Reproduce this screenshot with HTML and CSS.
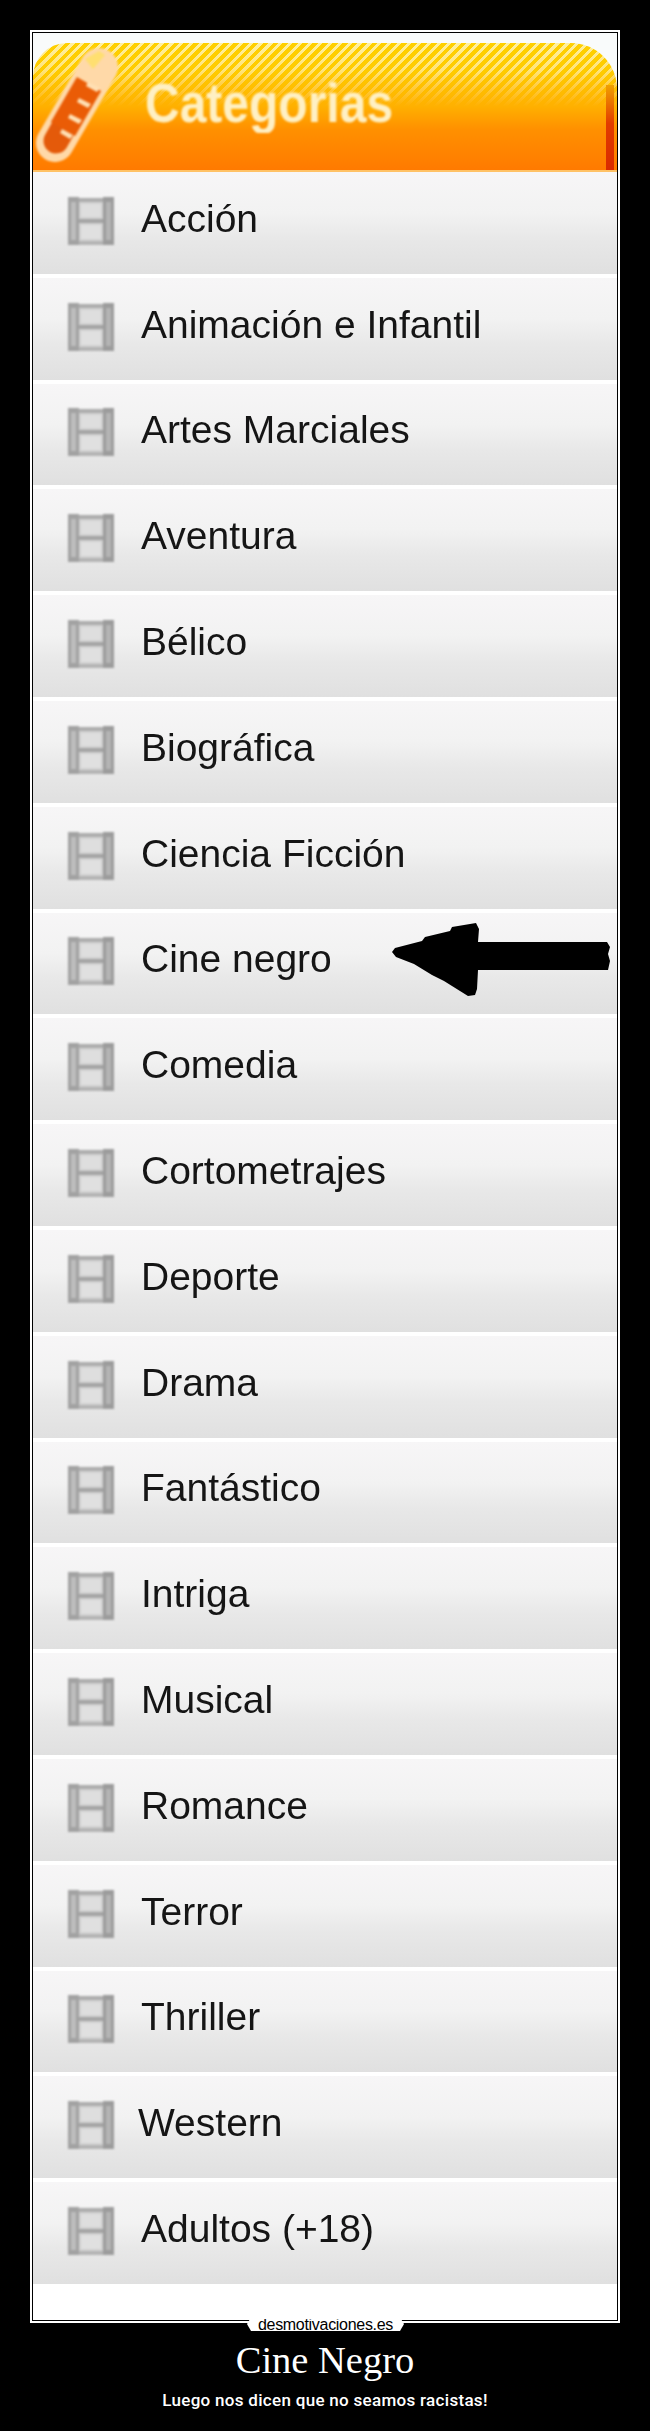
FILE: index.html
```html
<!DOCTYPE html>
<html lang="es">

<head>
  <meta charset="UTF-8">
  <meta name="viewport" content="width=device-width, initial-scale=1.0">
  <title>Cine Negro</title>
  <link rel="stylesheet" href="styles.css">
</head>

<body>
  <svg class="defs" width="0" height="0" aria-hidden="true">
    <symbol id="film" viewBox="0 0 46 48">
      <rect x="2" y="1" width="42" height="46" fill="#d2d2d2" />
      <rect x="0" y="0" width="11" height="48" fill="#a2a2a2" />
      <rect x="35" y="0" width="11" height="48" fill="#9c9c9c" />
      <rect x="3" y="5" width="5" height="38" fill="#bdbdbd" />
      <rect x="38" y="5" width="5" height="38" fill="#b4b4b4" />
      <rect x="11" y="1" width="24" height="4" fill="#adadad" />
      <rect x="11" y="22" width="24" height="4" fill="#a4a4a4" />
      <rect x="11" y="44" width="24" height="4" fill="#b4b4b4" />
      <rect x="13" y="7" width="20" height="13" fill="#dedede" />
      <rect x="13" y="28" width="20" height="14" fill="#e0e0e0" />
    </symbol>
  </svg>

  <div class="frame">
    <div class="header">
      <svg class="header-icon" width="100" height="130" viewBox="0 0 100 130">
        <path d="M22 100 L66 24" stroke="#ffd9a8" stroke-width="38" stroke-linecap="round" fill="none" />
        <path d="M52 16 L66 8 L72 12 L60 26 Z" fill="#ffdf70" />
        <path d="M23 98 L36 75" stroke="#e45a0a" stroke-width="25" stroke-linecap="round" fill="none" />
        <path d="M30 86 L56 41" stroke="#ea5c06" stroke-width="28" fill="none" />
        <path d="M64 49l-11-6 2-4 12 6zM55 65l-11-6 2-4 12 6zM46 81l-11-6 2-4 12 6zM37 96l-10-6 2-4 11 6z" fill="#ffe0b4" />
      </svg>
      <h2 class="header-title">Categorias</h2>
    </div>

    <ul class="cats">
      <li class="cat"><svg class="film"><use href="#film" /></svg><span>Acción</span></li>
      <li class="cat"><svg class="film"><use href="#film" /></svg><span>Animación e Infantil</span></li>
      <li class="cat"><svg class="film"><use href="#film" /></svg><span>Artes Marciales</span></li>
      <li class="cat"><svg class="film"><use href="#film" /></svg><span>Aventura</span></li>
      <li class="cat"><svg class="film"><use href="#film" /></svg><span>Bélico</span></li>
      <li class="cat"><svg class="film"><use href="#film" /></svg><span>Biográfica</span></li>
      <li class="cat"><svg class="film"><use href="#film" /></svg><span>Ciencia Ficción</span></li>
      <li class="cat">
        <svg class="film"><use href="#film" /></svg><span>Cine negro</span>
        <svg class="arrow" width="220" height="74" viewBox="0 0 220 74">
          <path d="M0 29 L3 25 L30 18 L33 14 L58 8 L60 4 L84 0 L87 6 L86 19 L215 19 L218 24 L216 31 L218 38 L216 47 L86 47 L85 66 L83 72 L76 73 L52 58 L40 52 L22 41 L4 34 Z" fill="#000" />
        </svg>
      </li>
      <li class="cat"><svg class="film"><use href="#film" /></svg><span>Comedia</span></li>
      <li class="cat"><svg class="film"><use href="#film" /></svg><span>Cortometrajes</span></li>
      <li class="cat"><svg class="film"><use href="#film" /></svg><span>Deporte</span></li>
      <li class="cat"><svg class="film"><use href="#film" /></svg><span>Drama</span></li>
      <li class="cat"><svg class="film"><use href="#film" /></svg><span>Fantástico</span></li>
      <li class="cat"><svg class="film"><use href="#film" /></svg><span>Intriga</span></li>
      <li class="cat"><svg class="film"><use href="#film" /></svg><span>Musical</span></li>
      <li class="cat"><svg class="film"><use href="#film" /></svg><span>Romance</span></li>
      <li class="cat"><svg class="film"><use href="#film" /></svg><span>Terror</span></li>
      <li class="cat"><svg class="film"><use href="#film" /></svg><span>Thriller</span></li>
      <li class="cat cat-western"><svg class="film"><use href="#film" /></svg><span>Western</span></li>
      <li class="cat"><svg class="film"><use href="#film" /></svg><span>Adultos (+18)</span></li>
    </ul>

    <div class="site-tag">desmotivaciones.es</div>
  </div>

  <h1 class="poster-title">Cine Negro</h1>
  <p class="poster-sub">Luego nos dicen que no seamos racistas!</p>
</body>

</html>
```

FILE: styles.css
```css
html,
body {
  margin: 0;
  padding: 0;
  background: #000;
}

body {
  width: 650px;
  height: 2431px;
  overflow: hidden;
  padding-top: 30px;
  box-sizing: border-box;
}

.defs {
  display: block;
  height: 0;
}

.frame {
  position: relative;
  box-sizing: border-box;
  width: 590px;
  height: 2293px;
  margin: 0 30px;
  border: 2px solid #fff;
  padding: 1px;
  background: #f9fbfb;
  box-shadow: inset 0 0 0 1px #000;
}

.frame::before {
  content: "";
  display: block;
  height: 10px;
}

.header {
  position: relative;
  height: 129px;
  border-radius: 34px 46px 0 0;
  border-bottom: 2px solid #ffc266;
  box-sizing: border-box;
  overflow: hidden;
  background:
    linear-gradient(180deg, rgba(255, 190, 0, 0) 0, rgba(255, 190, 0, .25) 22%, #ffb000 50%, #ff9000 68%, #ff7a00 100%),
    repeating-linear-gradient(-45deg, #ffd000 0 4px, #fff0a0 4px 7px);
}

.header::after {
  content: "";
  position: absolute;
  right: 3px;
  top: 42px;
  bottom: 0;
  width: 8px;
  background: linear-gradient(180deg, #f0a000, #e23c00 45%, #d92a00);
  filter: blur(.6px);
}

.header-icon {
  position: absolute;
  left: 0;
  top: 0;
  filter: blur(1px);
}

.header-title {
  margin: 0;
  padding: 28px 0 0 112px;
  font-family: "Liberation Sans", Arial, sans-serif;
  font-size: 48px;
  line-height: 60px;
  font-weight: bold;
  color: #fff0c4;
  transform: scaleY(1.15);
  transform-origin: left center;
  filter: blur(.8px);
}

.cats {
  list-style: none;
  margin: 0;
  padding: 0;
  background: #fff;
  height: 2148px;
  overflow: hidden;
}

.cat {
  position: relative;
  box-sizing: border-box;
  display: flex;
  align-items: center;
  gap: 27px;
  height: 105.8px;
  padding: 0 0 4px 35px;
  border-bottom: 4px solid #fff;
  background: linear-gradient(180deg, #f7f6f7 0, #f2f2f2 40%, #e8e8e8 65%, #e0e0e0 100%);
  font-family: "Liberation Sans", Arial, sans-serif;
  font-size: 39px;
  line-height: 48px;
  color: #151515;
}

.cat span {
  position: relative;
  top: -2px;
  filter: blur(.35px);
}

.cat-western span {
  left: -3px;
}

.film {
  flex: none;
  width: 46px;
  height: 48px;
  filter: blur(.9px);
}

.arrow {
  position: absolute;
  left: 359px;
  top: 10px;
}

.site-tag {
  position: absolute;
  left: 215px;
  bottom: -10px;
  width: 157px;
  height: 12px;
  background: #fff;
  clip-path: polygon(3px 0, 154px 0, 157px 5px, 153px 100%, 4px 100%, 0 5px);
  text-align: center;
  font-family: "Liberation Sans", Arial, sans-serif;
  font-size: 16px;
  line-height: 12px;
  letter-spacing: -.3px;
  color: #000;
}

.poster-title {
  margin: 14px 0 0;
  text-align: center;
  font-family: "Liberation Serif", "Times New Roman", serif;
  font-size: 38.5px;
  line-height: 46px;
  font-weight: normal;
  color: #fff;
}

.poster-sub {
  margin: 7px 0 0;
  text-align: center;
  font-family: Roboto, "Liberation Sans", sans-serif;
  font-size: 17px;
  line-height: 20px;
  font-weight: 500;
  letter-spacing: .3px;
  color: #fff;
}
```
